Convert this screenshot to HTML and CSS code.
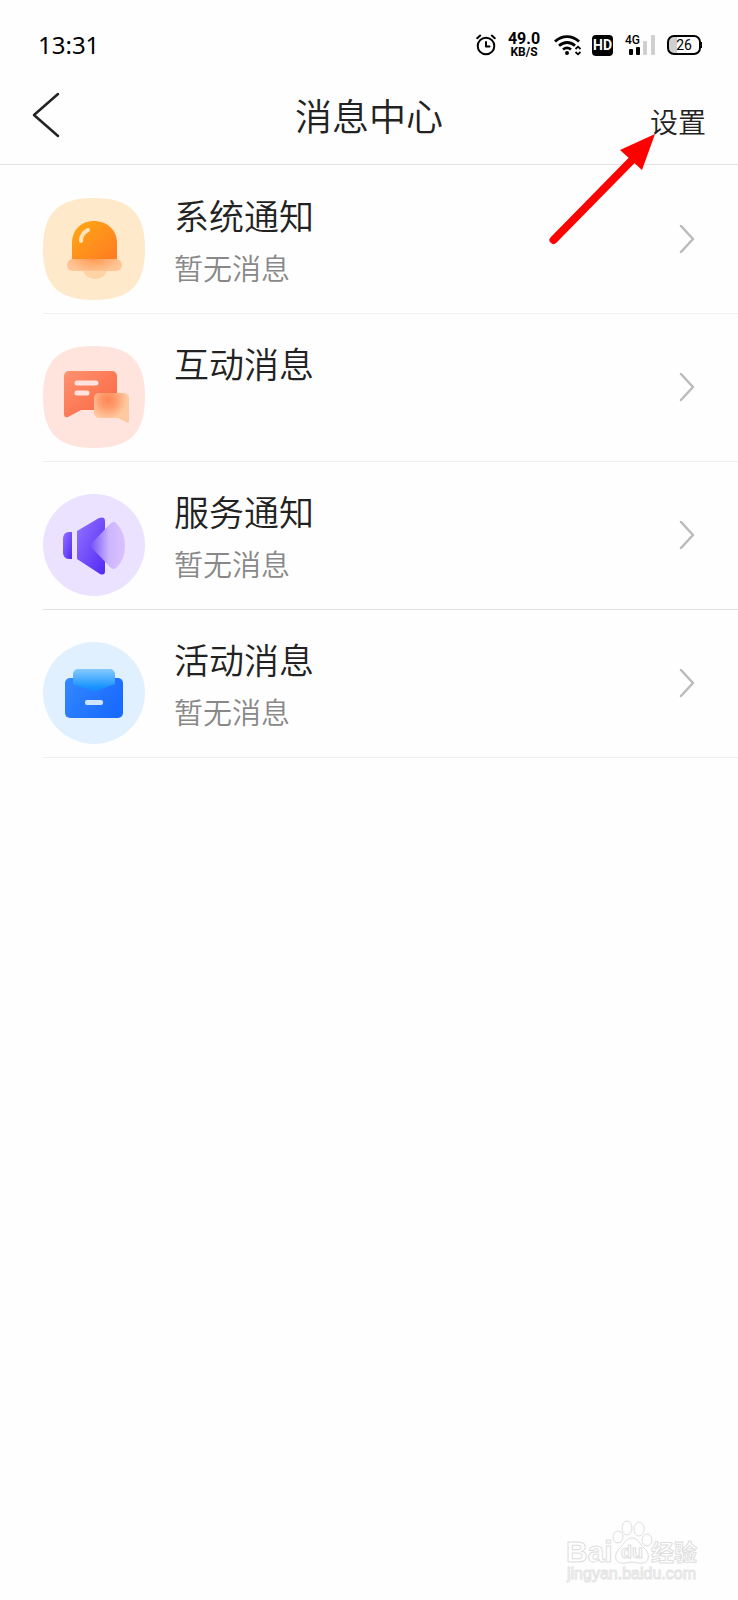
FILE: index.html
```html
<!DOCTYPE html>
<html lang="zh-CN">
<head>
    <meta charset="UTF-8">
    <meta name="viewport" content="width=device-width, initial-scale=1.0">
    <title>消息中心</title>
    <link rel="stylesheet" href="styles.css">
</head>
<body>
<div class="status-bar">
    <span class="time">13:31</span>
    <div class="status-icons">
        <svg class="alarm" width="20" height="22" viewBox="0 0 20 22" fill="none" stroke="#000" stroke-width="2" stroke-linecap="round" stroke-linejoin="round">
            <circle cx="10" cy="12" r="8.3"/>
            <path d="M10 8v4.5h3.5M1.2 4.2l3-2.6M18.8 4.2l-3-2.6"/>
        </svg>
        <div class="speed">
            <span class="speed-num">49.0</span>
            <span class="speed-unit">KB/S</span>
        </div>
        <svg class="wifi" width="28" height="22" viewBox="0 0 28 22" fill="none" stroke="#000" stroke-width="2.8">
            <path d="M1 7.5c7-6.5 17-6.5 24 0M5 11.8c5-4.4 11.5-4.4 16 0M9 15.5c2.5-2 5.5-2 8 0"/>
            <circle cx="13" cy="19" r="2" fill="#000" stroke="none"/>
            <path d="M21.5 15l2.5-2.3 2.5 2.3M21.5 18l2.5 2.3 2.5-2.3" stroke-width="1.7"/>
        </svg>
        <span class="hd">HD</span>
        <div class="signal">
            <span class="signal-type">4G</span>
            <svg width="30" height="22" viewBox="0 0 30 22">
                <rect x="4" y="15" width="4" height="6" rx="1"/>
                <rect x="11" y="13" width="4" height="8" rx="1"/>
                <rect x="18" y="7" width="4" height="14" rx="1" fill="#d0d0d0"/>
                <rect x="26" y="1" width="4" height="20" rx="1" fill="#d0d0d0"/>
            </svg>
        </div>
        <span class="battery">26</span>
    </div>
</div>

<header class="header">
    <button type="button" class="back" aria-label="返回">
        <svg width="28" height="46" viewBox="0 0 28 46" fill="none" stroke="#222" stroke-width="2.5" stroke-linecap="round" stroke-linejoin="round">
            <path d="M26 2L2 23l24 21"/>
        </svg>
    </button>
    <h1>消息中心</h1>
    <button type="button" class="settings">设置</button>
    <!-- 指向设置的箭头 -->
    <svg class="pointer" width="110" height="114" viewBox="0 0 110 114">
        <path d="M8.5 107L90 24" stroke="#f00" stroke-width="8" stroke-linecap="round"/>
        <path d="M110 1L75 17l22 20z" fill="#f00"/>
    </svg>
</header>

<main class="list">
    <a class="item" href="#">
        <svg class="icon" viewBox="0 0 102 102">
            <defs>
                <linearGradient id="bell" x1="0" y1="0" x2="1" y2="1">
                    <stop offset="0" stop-color="#ffa914"/>
                    <stop offset="1" stop-color="#ff7a24"/>
                </linearGradient>
                <radialGradient id="rim" gradientUnits="userSpaceOnUse" cx="51" cy="58" r="28" gradientTransform="matrix(1 0 0 .6 0 23)">
                    <stop offset="0" stop-color="#ff9240"/>
                    <stop offset="0.7" stop-color="#ffb680"/>
                    <stop offset="1" stop-color="#ffc594"/>
                </radialGradient>
            </defs>
            <path d="M51 0c36 0 51 15 51 51s-15 51-51 51S0 87 0 51 15 0 51 0z" fill="#ffe9cb"/>
            <path d="M40 71h24c0 6-6 10-12 10s-12-4-12-10z" fill="#ffd3a6"/>
            <path d="M29 63V45c0-13 9-22 22-22s23 9 23 22v18z" fill="url(#bell)"/>
            <rect x="24" y="61" width="55" height="12" rx="6" fill="url(#rim)"/>
            <path d="M38 43c0-5 3-9 7-11" fill="none" stroke="#ffe6b8" stroke-width="4" stroke-linecap="round"/>
        </svg>
        <div class="text">
            <h2>系统通知</h2>
            <p>暂无消息</p>
        </div>
        <svg class="arrow" viewBox="0 0 16 28"><path d="M2 1l12 13L2 27"/></svg>
    </a>
    <a class="item" href="#">
        <svg class="icon" viewBox="0 0 102 102">
            <defs>
                <linearGradient id="bubble" x1="0" y1="0" x2="1" y2="1">
                    <stop offset="0" stop-color="#ff9270"/>
                    <stop offset="1" stop-color="#f8643e"/>
                </linearGradient>
                <radialGradient id="reply" gradientUnits="userSpaceOnUse" cx="65" cy="54" r="19">
                    <stop offset="0" stop-color="#ff8455"/>
                    <stop offset="0.4" stop-color="#ff9a6b"/>
                    <stop offset="1" stop-color="#ffc9a0"/>
                </radialGradient>
            </defs>
            <path d="M51 0c36 0 51 15 51 51s-15 51-51 51S0 87 0 51 15 0 51 0z" fill="#ffe3dd"/>
            <path d="M26 25h43a5 5 0 0 1 5 5v34H38l-13 7q-4 1-4-3V30a5 5 0 0 1 5-5z" fill="url(#bubble)"/>
            <path d="M34 37h19M34 47h10" stroke="#ffe3dd" stroke-width="5" stroke-linecap="round"/>
            <path d="M56 47h25a5 5 0 0 1 5 5v23q0 3-3 1l-8-4H56a5 5 0 0 1-5-5V52a5 5 0 0 1 5-5z" fill="url(#reply)"/>
        </svg>
        <div class="text">
            <h2>互动消息</h2>
        </div>
        <svg class="arrow" viewBox="0 0 16 28"><path d="M2 1l12 13L2 27"/></svg>
    </a>
    <a class="item item-dark" href="#">
        <svg class="icon" viewBox="0 0 102 102">
            <defs>
                <linearGradient id="horn" x1="0" y1="0" x2="1" y2="1">
                    <stop offset="0" stop-color="#9474ff"/>
                    <stop offset="1" stop-color="#5228f5"/>
                </linearGradient>
                <linearGradient id="wave" x1="0" y1="0" x2="1" y2="0">
                    <stop offset="0" stop-color="#7452f8"/>
                    <stop offset="0.55" stop-color="#ceb6fd"/>
                    <stop offset="1" stop-color="#d9c1ff"/>
                </linearGradient>
            </defs>
            <circle cx="51" cy="51" r="51" fill="#ebe2ff"/>
            <path d="M29 38v27h-3c-4 0-6-3-6-7V45c0-4 2-7 6-7z" fill="url(#horn)"/>
            <path d="M34 37l22-13q6-2 6 3v50q0 5-5 3L34 65z" fill="url(#horn)"/>
            <path d="M48 50l19-20q4-4 7 0 8 9 8 22t-8 21q-3 4-7 0L48 53q-1-1 0-3z" fill="url(#wave)"/>
        </svg>
        <div class="text">
            <h2>服务通知</h2>
            <p>暂无消息</p>
        </div>
        <svg class="arrow" viewBox="0 0 16 28"><path d="M2 1l12 13L2 27"/></svg>
    </a>
    <a class="item" href="#">
        <svg class="icon" viewBox="0 0 102 102">
            <defs>
                <linearGradient id="box" x1="0" y1="0" x2="1" y2="0.5">
                    <stop offset="0" stop-color="#3489ff"/>
                    <stop offset="1" stop-color="#1a6bff"/>
                </linearGradient>
                <linearGradient id="flap" x1="0" y1="0" x2="0" y2="1">
                    <stop offset="0" stop-color="#86caff"/>
                    <stop offset="0.8" stop-color="#1994ff"/>
                    <stop offset="1" stop-color="#1b86ff"/>
                </linearGradient>
            </defs>
            <circle cx="51" cy="51" r="51" fill="#e1f0ff"/>
            <rect x="22" y="36" width="58" height="40" rx="5" fill="url(#box)"/>
            <path d="M35 27h32a5 5 0 0 1 5 5v10l-19 7q-2 1-4 0l-19-7V32a5 5 0 0 1 5-5z" fill="url(#flap)"/>
            <rect x="42" y="58" width="18" height="5" rx="2" fill="#cfe4ff"/>
        </svg>
        <div class="text">
            <h2>活动消息</h2>
            <p>暂无消息</p>
        </div>
        <svg class="arrow" viewBox="0 0 16 28"><path d="M2 1l12 13L2 27"/></svg>
    </a>
</main>

<footer class="watermark">
    <svg width="136" height="66" viewBox="0 0 136 66">
        <ellipse cx="53" cy="17" rx="5" ry="6"/>
        <ellipse cx="62" cy="8" rx="5" ry="7"/>
        <ellipse cx="74" cy="9" rx="5" ry="7"/>
        <ellipse cx="82" cy="20" rx="5" ry="6"/>
        <path d="M67 18c-6 0-8 6-12 10-6 5-6 14 1 15 4 1 7-1 11-1s7 2 11 1c7-1 7-10 1-15-4-4-6-10-12-10z"/>
        <text class="logo" x="1" y="42">Bai</text>
        <text class="logo-du" x="56" y="38">du</text>
        <text class="logo-cn" x="86" y="41">经验</text>
        <text class="url" x="2" y="59">jingyan.baidu.com</text>
    </svg>
</footer>
</body>
</html>
```
FILE: styles.css
```css
* {
    box-sizing: border-box;
}
body {
    display: flex;
    flex-direction: column;
    min-height: 100vh;
    margin: 0;
    background: #fefefe;
    color: #222;
    font-family: "Noto Sans", "Noto Sans CJK SC", sans-serif;
}
h1, h2, p {
    margin: 0;
    font-family: "Noto Sans CJK SC", sans-serif;
    font-weight: 350;
}
button {
    padding: 0;
    border: none;
    background: none;
    color: inherit;
    font-family: "Noto Sans CJK SC", sans-serif;
}

/* 状态栏 */
.status-bar {
    display: flex;
    align-items: center;
    justify-content: space-between;
    height: 68px;
    padding: 22px 37px 0 38px;
    color: #000;
}
.time {
    font-size: 24px;
    line-height: 28px;
}
.status-icons {
    display: flex;
    align-items: center;
    font-family: Roboto, sans-serif;
}
.speed {
    display: flex;
    flex-direction: column;
    align-items: center;
    width: 36px;
    margin: 0 12px 0 10px;
    font-weight: 700;
}
.speed-num {
    font-size: 16px;
    line-height: 14px;
}
.speed-unit {
    font-size: 12px;
    line-height: 12px;
}
.hd {
    width: 21px;
    margin: 0 12px 0 10px;
    border-radius: 4px;
    background: #000;
    color: #fff;
    font-size: 14px;
    font-weight: 700;
    line-height: 21px;
    text-align: center;
}
.signal {
    position: relative;
    height: 22px;
    margin-right: 12px;
}
.signal-type {
    position: absolute;
    top: 0;
    left: 0;
    font-size: 12px;
    font-weight: 500;
    line-height: 12px;
}
.battery {
    position: relative;
    width: 34px;
    border: 2px solid #000;
    border-radius: 7px;
    background: linear-gradient(to right, #d0d0d0 26%, #fefefe 26%);
    font-size: 14px;
    line-height: 16px;
    text-align: center;
}
.battery::after {
    content: "";
    position: absolute;
    top: 5px;
    right: -3px;
    width: 2px;
    height: 6px;
    background: #000;
}

/* 标题栏 */
.header {
    position: relative;
    display: grid;
    grid-template-columns: 1fr auto 1fr;
    align-items: center;
    height: 97px;
    padding: 0 32px;
    border-bottom: 1px solid #e2e2e2;
}
.back {
    justify-self: start;
    padding-bottom: 2px;
}
.back svg {
    display: block;
}
h1 {
    padding-bottom: 2px;
    font-size: 37px;
    line-height: 40px;
}
.settings {
    justify-self: end;
    padding-top: 9px;
    font-size: 28px;
    font-weight: 350;
    line-height: 32px;
}
.pointer {
    position: absolute;
    top: 65px;
    right: 83px;
}

/* 消息列表 */
.list {
    margin-left: 43px;
    padding-top: 1px;
}
.item {
    display: flex;
    align-items: flex-start;
    height: 148px;
    padding: 32px 43px 0 0;
    border-bottom: 1px solid #f0f0f0;
    color: inherit;
    text-decoration: none;
}
.item-dark {
    border-color: #e2e2e2;
}
.icon {
    width: 102px;
    height: 102px;
    margin-right: 29px;
}
.text {
    flex: 1;
}
h2 {
    font-size: 35px;
    line-height: 34px;
}
.text p {
    margin-top: 19px;
    color: #888;
    font-size: 29px;
    line-height: 32px;
}
.arrow {
    width: 16px;
    height: 28px;
    margin-top: 27px;
    fill: none;
    stroke: #bbb;
    stroke-width: 2.5;
    stroke-linecap: round;
    stroke-linejoin: round;
}

/* 水印 */
.watermark {
    display: flex;
    justify-content: flex-end;
    margin-top: auto;
    padding: 0 37px 14px 0;
}
.watermark svg {
    fill: #fefefe;
    stroke: #dedede;
    stroke-width: 1;
    font-family: "Liberation Sans", "Noto Sans CJK SC", sans-serif;
}
.logo {
    font-size: 30px;
    font-weight: 700;
}
.logo-du {
    font-size: 18px;
    font-weight: 700;
}
.logo-cn {
    font-size: 23px;
    font-weight: 700;
}
.watermark .url {
    stroke: #e4e4e4;
    font-size: 16px;
}
```
